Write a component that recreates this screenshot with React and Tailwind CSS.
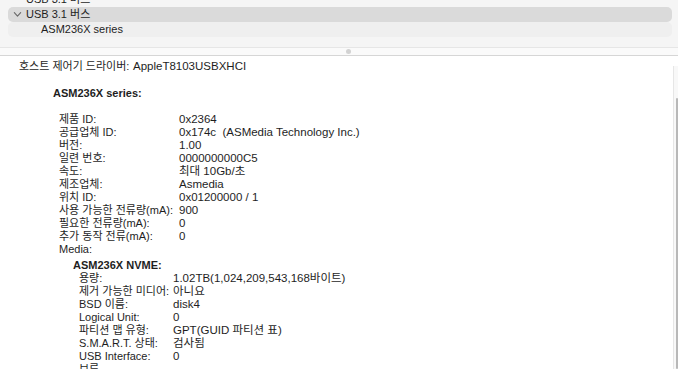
import React from 'react';

const deviceRows = [
  ['제품 ID:', '0x2364'],
  ['공급업체 ID:', '0x174c  (ASMedia Technology Inc.)'],
  ['버전:', '1.00'],
  ['일련 번호:', '0000000000C5'],
  ['속도:', '최대 10Gb/초'],
  ['제조업체:', 'Asmedia'],
  ['위치 ID:', '0x01200000 / 1'],
  ['사용 가능한 전류량(mA):', '900'],
  ['필요한 전류량(mA):', '0'],
  ['추가 동작 전류(mA):', '0'],
];

const mediaRows = [
  ['용량:', '1.02TB(1,024,209,543,168바이트)'],
  ['제거 가능한 미디어:', '아니요'],
  ['BSD 이름:', 'disk4'],
  ['Logical Unit:', '0'],
  ['파티션 맵 유형:', 'GPT(GUID 파티션 표)'],
  ['S.M.A.R.T. 상태:', '검사됨'],
  ['USB Interface:', '0'],
  ['보류', ''],
];

const Chevron = () => (
  <svg width="9" height="9" viewBox="0 0 10 10" fill="none" stroke="#6b6b6b" strokeWidth="1.3" strokeLinecap="round" strokeLinejoin="round">
    <polyline points="1.5 3 5 6.8 8.5 3" />
  </svg>
);

export default function App() {
  return (
    <div
      className="w-[678px] h-[369px] overflow-hidden bg-white text-[11px] leading-[13px] text-[#1e1e1e] flex flex-col"
      style={{ fontFamily: '"Liberation Sans", "Noto Sans CJK KR", sans-serif' }}
    >
      {/* Tree pane */}
      <div className="h-[47px] shrink-0 bg-[#f5f5f5] overflow-hidden px-[8px]">
        <div className="-mt-[8px] flex flex-col">
          <div className="h-[15px] flex items-center pl-[18px]">USB 3.1 버스</div>
          <div className="h-[15px] flex items-center rounded-[5px] bg-[#dadada] mr-[-2px]">
            <span className="w-[18px] flex justify-center pl-[1px]"><Chevron /></span>
            <span>USB 3.1 버스</span>
          </div>
          <div className="h-[15px] flex items-center rounded-[5px] bg-[#efefef] pl-[33px] mr-[-2px]">ASM236X series</div>
        </div>
      </div>

      {/* Split divider */}
      <div className="h-[9px] shrink-0 border-t border-[#e6e6e6] border-b-[1px] border-b-[#d6d6d6] bg-[#fafafa] flex items-center justify-center">
        <div className="w-[5px] h-[5px] rounded-full bg-[#d2d2d2] ml-[18px]" />
      </div>

      {/* Detail pane */}
      <div className="relative flex-1 overflow-hidden pl-[19px] pt-[4px]">
        <div className="flex whitespace-nowrap">
          <span className="w-[114px] shrink-0">호스트 제어기 드라이버:</span>
          <span className="text-[11.5px]">AppleT8103USBXHCI</span>
        </div>

        <div className="pl-[34px] mt-[14px] font-bold">ASM236X series:</div>

        <div className="pl-[40px] mt-[13px] flex flex-col">
          {deviceRows.map(([k, v]) => (
            <div key={k} className="flex whitespace-pre">
              <span className="w-[120px] shrink-0">{k}</span>
              <span className="text-[11.5px]">{v}</span>
            </div>
          ))}
          <div>Media:</div>
          <div className="pl-[14px] mt-[3px] font-bold">ASM236X NVME:</div>
          <div className="pl-[20px] flex flex-col">
            {mediaRows.map(([k, v]) => (
              <div key={k} className="flex whitespace-nowrap">
                <span className="w-[94px] shrink-0">{k}</span>
                <span className="text-[11.5px]">{v}</span>
              </div>
            ))}
          </div>
        </div>

        {/* scrollbar */}
        <div className="absolute right-0 top-[10px] bottom-0 w-[5px] bg-[#f8f8f8] border-l border-[#e6e6e6]">
          <div className="absolute right-0 top-[32px] bottom-0 w-[2px] rounded-full bg-[#b8b8b8]" />
        </div>
      </div>
    </div>
  );
}
